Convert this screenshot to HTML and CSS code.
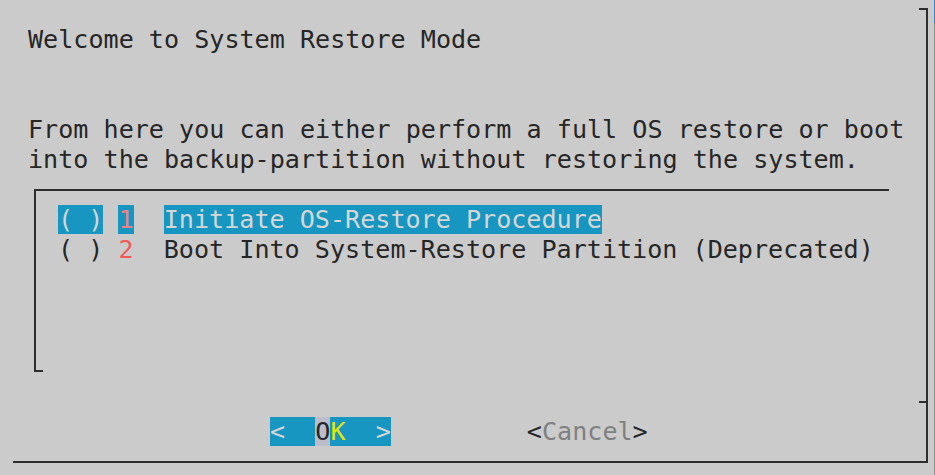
FILE: index.html
```html
<!DOCTYPE html>
<html lang="en">
<head>
    <meta charset="UTF-8">
    <meta name="viewport" content="width=device-width, initial-scale=1.0">
    <link rel="stylesheet" href="styles.css">
</head>
<body>

<div class="window">
    <div class="row">Welcome to System Restore Mode</div>
    <div class="row"></div>
    <div class="row"></div>
    <div class="row">From here you can either perform a full OS restore or boot</div>
    <div class="row">into the backup-partition without restoring the system.</div>

    <div class="menu">
        <div class="row"><span class="sel">( )</span> <span class="sel tag">1</span>  <span class="sel">Initiate OS-Restore Procedure</span></div>
        <div class="row">( ) <span class="tag">2</span>  Boot Into System-Restore Partition (Deprecated)</div>
    </div>

    <div class="row buttons"><span class="btn">&lt;  <span class="hot">O</span><span class="key">K</span>  &gt;</span>         &lt;<span class="dim">Cancel</span>&gt;</div>
</div>

</body>
</html>
```

FILE: styles.css
```css
body {
    margin: 0;
    height: 475px;
    background:
        linear-gradient(#2f86cf, #2f86cf) right top / 1px 23px no-repeat,
        linear-gradient(#8f8f8f, #8f8f8f) right top / 1px 100% no-repeat,
        #cbcbcb;
    color: #262626;
    font-family: "DejaVu Sans Mono", monospace;
    font-size: 25.1px;
    line-height: 30px;
    overflow: hidden;
}
.window {
    position: relative;
    box-sizing: border-box;
    margin: 8px 0 0 13px;
    width: 915px;
    height: 455px;
    padding: 17px 0 0 15px;
    border-right: 2px solid #2e2e2e;
    border-bottom: 2px solid #2e2e2e;
}
/* top corner and separator stubs on the right edge */
.window::before,
.window::after {
    content: '';
    position: absolute;
    right: 0;
    width: 7px;
    height: 2px;
    background: #2e2e2e;
}
.window::before { top: 0; }
.window::after { top: 393px; }

.row {
    height: 30px;
    white-space: pre;
}
.menu {
    position: relative;
    box-sizing: border-box;
    margin: 14px 0 0 6px;
    width: 855px;
    height: 183px;
    padding: 14px 0 0 22px;
    border-top: 2px solid #2e2e2e;
    border-left: 2px solid #2e2e2e;
}
.menu::after {
    content: '';
    position: absolute;
    left: 0;
    bottom: 0;
    width: 7px;
    height: 2px;
    background: #2e2e2e;
}
.sel {
    background: #1696c0;
    color: #d6d6d6;
}
.tag { color: #f25a5a; }
.sel.tag { color: #f08080; }

.buttons {
    margin-top: 45px;
    padding-left: 242px;
}
.btn {
    background: #1696c0;
    color: #d6d6d6;
}
.hot {
    background: #bcbccb;
    color: #262626;
}
.key { color: #e2e600; }
.dim { color: #808080; }
```
